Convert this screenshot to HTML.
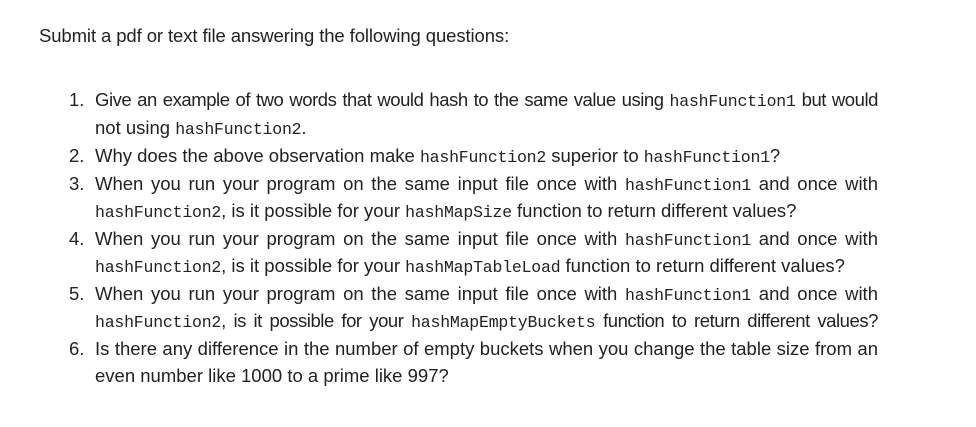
<!DOCTYPE html>
<html><head><meta charset="utf-8"><style>
html,body{margin:0;padding:0;background:#fff;width:976px;height:427px;overflow:hidden}
body{font-family:"Liberation Sans",sans-serif;color:#222;font-size:18.5px;position:relative}
.h{position:absolute;left:39px;top:25px;white-space:nowrap;letter-spacing:-0.1px}
.n{position:absolute;left:69px;white-space:nowrap}
.l{position:absolute;left:95px;width:783px;height:24px;overflow:hidden;line-height:22px}
.j{text-align:justify;text-align-last:justify}
.t{letter-spacing:-0.45px;word-spacing:-1px}
code{font-family:"Liberation Mono",monospace;font-size:16.5px;letter-spacing:-0.2px}
</style></head><body>
<div class="h">Submit a pdf or text file answering the following questions:</div>

<div class="n" style="top:89px">1.</div>
<div class="l j t" style="top:89px">Give an example of two words that would hash to the same value using <code>hashFunction1</code> but would</div>
<div class="l" style="top:117px">not using <code>hashFunction2</code>.</div>

<div class="n" style="top:145px">2.</div>
<div class="l" style="top:145px">Why does the above observation make <code>hashFunction2</code> superior to <code>hashFunction1</code>?</div>

<div class="n" style="top:173px">3.</div>
<div class="l j" style="top:173px">When you run your program on the same input file once with <code>hashFunction1</code> and once with</div>
<div class="l" style="top:200px"><code>hashFunction2</code>, is it possible for your <code>hashMapSize</code> function to return different values?</div>

<div class="n" style="top:228px">4.</div>
<div class="l j" style="top:228px">When you run your program on the same input file once with <code>hashFunction1</code> and once with</div>
<div class="l" style="top:255px"><code>hashFunction2</code>, is it possible for your <code>hashMapTableLoad</code> function to return different values?</div>

<div class="n" style="top:283px">5.</div>
<div class="l j" style="top:283px">When you run your program on the same input file once with <code>hashFunction1</code> and once with</div>
<div class="l j t" style="top:310px"><code>hashFunction2</code>, is it possible for your <code>hashMapEmptyBuckets</code> function to return different values?</div>

<div class="n" style="top:338px">6.</div>
<div class="l j" style="top:338px">Is there any difference in the number of empty buckets when you change the table size from an</div>
<div class="l" style="top:365px">even number like 1000 to a prime like 997?</div>
</body></html>
